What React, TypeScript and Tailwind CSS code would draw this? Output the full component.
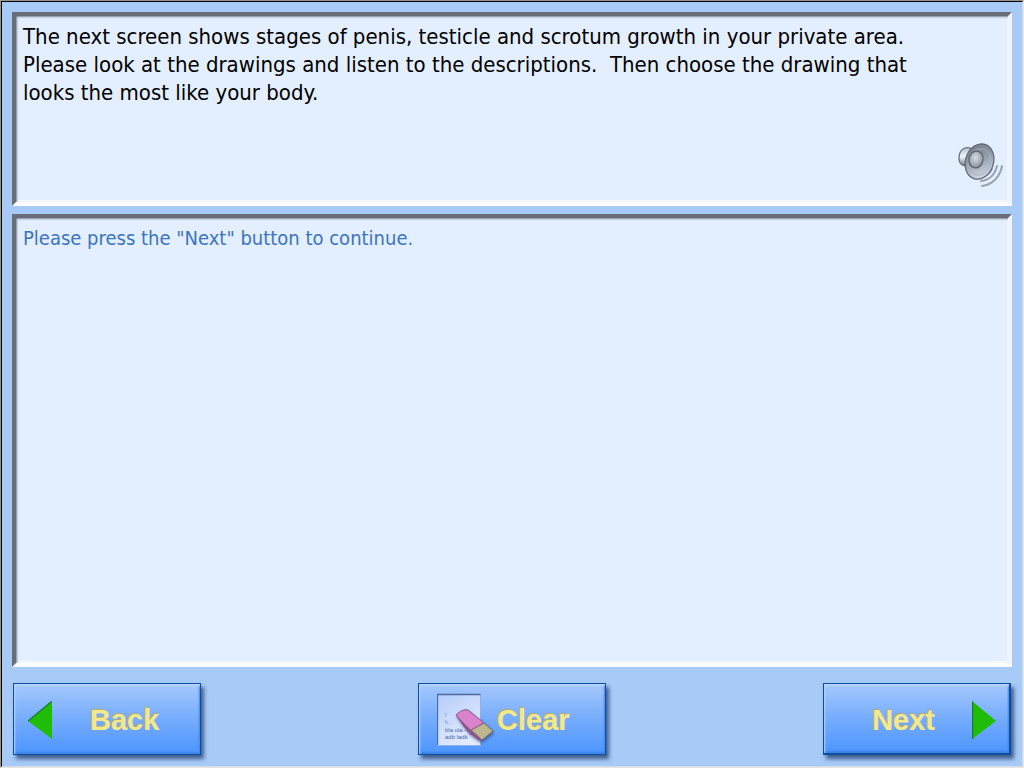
import { useState } from "react"
import type { ReactNode } from "react"

const intro = [
  "The next screen shows stages of penis, testicle and scrotum growth in your private area.",
  "Please look at the drawings and listen to the descriptions.\u00a0 Then choose the drawing that",
  "looks the most like your body.",
].join(" ")

function Panel({ children, className = "" }: { children: ReactNode; className?: string }) {
  return (
    <section
      className={`border-4 border-t-[#696d79] border-r-[#edf5ff] border-b-white border-l-[#696d79] bg-[#e3effe] pt-[7px] pr-0.5 pl-[7px] shadow-[inset_1px_1px_2px_#7d8696,inset_-1px_-2px_1px_#f8fbff] ${className}`}
    >
      {children}
    </section>
  )
}

function SpeakerIcon() {
  return (
    <svg viewBox="0 0 48 48" className="size-12" aria-hidden="true">
      <defs>
        <linearGradient id="cone" x1="0" y1="0" x2="0.6" y2="1">
          <stop offset="0" stopColor="#6f7782" />
          <stop offset="0.45" stopColor="#8c96a3" />
          <stop offset="1" stopColor="#ced8e4" />
        </linearGradient>
        <radialGradient id="dome" cx="0.45" cy="0.4" r="0.6">
          <stop offset="0" stopColor="#d5dde6" />
          <stop offset="1" stopColor="#89939f" />
        </radialGradient>
        <linearGradient id="magnet" x1="0" y1="0" x2="0" y2="1">
          <stop offset="0" stopColor="#b9c3ce" />
          <stop offset="0.5" stopColor="#edf3fa" />
          <stop offset="1" stopColor="#78828e" />
        </linearGradient>
      </defs>
      <g fill="none" stroke="#98a3b1" strokeWidth="2" strokeLinecap="round">
        <path d="M44 24C42 35 34 43 24 44" />
        <path d="M39 24C37 32 32 38 23 39" />
        <path d="M34 27C32 32 28 34 23 35" />
      </g>
      <path d="M14 7C6 3 1 9 1 16c0 6 4 9 9 7z" fill="url(#magnet)" stroke="#69727e" strokeWidth="1.3" />
      <ellipse cx="21.500" cy="19.500" rx="14" ry="18" transform="rotate(18 21.500 19.500)" fill="url(#cone)" stroke="#5c6571" strokeWidth="1.2" />
      <ellipse cx="21.500" cy="20" rx="11" ry="13.500" transform="rotate(18 21.500 20)" fill="none" stroke="#a7b1be" strokeWidth="0.8" />
      <ellipse cx="18" cy="17.500" rx="7" ry="8.500" transform="rotate(10 18 17.500)" fill="url(#dome)" stroke="#59626e" strokeWidth="1.3" />
    </svg>
  )
}

function EraserIcon() {
  return (
    <svg viewBox="0 0 58 54" className="h-[54px] w-[58px] shrink-0 text-shadow-none" aria-hidden="true">
      <defs>
        <linearGradient id="paper" x1="0" y1="0" x2="0.6" y2="1">
          <stop offset="0" stopColor="#b4cdfa" />
          <stop offset="1" stopColor="#e4ebff" />
        </linearGradient>
        <filter id="drop" x="-20%" y="-20%" width="150%" height="150%">
          <feDropShadow dx="1" dy="2" stdDeviation="1.5" floodColor="#253e70" floodOpacity="0.6" />
        </filter>
      </defs>
      <rect x="0.500" y="1.500" width="43" height="51" fill="url(#paper)" stroke="#8fb0e4" />
      <path d="M0.500 52V1.500H43.500" fill="none" stroke="#50689a" strokeWidth="1.3" />
      <g fontFamily="Liberation Sans, sans-serif" fontSize="6" fontWeight="400" fill="#4967a4">
        <text x="8" y="24" opacity="0.5">f</text>
        <text x="8" y="31" opacity="0.6">b..</text>
        <text x="8" y="39">bla  ola -s</text>
        <text x="8" y="46">adb ladk</text>
      </g>
      <g filter="url(#drop)" strokeLinejoin="round">
        <path d="M19 22c4-4 8-6 12-5l16 13-13 12z" fill="#db83ca" stroke="#805a91" />
        <path d="M47 30l9 8-11 9-11-10z" fill="#beb68e" stroke="#716d69" />
        <path d="M19 22l15 15 11 10-2 1c-9-5-17-14-24-26z" fill="#8d558d" />
        <path d="M47 30L34 37" stroke="#8c668f" />
      </g>
    </svg>
  )
}

function Arrow({ direction }: { direction: "left" | "right" }) {
  return (
    <svg viewBox="0 0 24 38" className="h-[38px] w-6 shrink-0" aria-hidden="true">
      <path d={direction === "left" ? "M24 0v38L0 20z" : "M0 0v38l24-18z"} fill="#1fbd05" />
      <path
        d={direction === "left" ? "M0 20L23.500 0.500" : "M0.500 38V0.500"}
        fill="none"
        stroke="#187c25"
        strokeWidth="1.3"
      />
    </svg>
  )
}

function NavButton({ children, onClick, className = "" }: { children: ReactNode; onClick: () => void; className?: string }) {
  return (
    <button
      type="button"
      onClick={onClick}
      className={`flex h-[72px] w-[188px] cursor-pointer items-center border border-[#0b4ea2] bg-linear-to-b from-[#a5c8fd] via-[#75acfd] to-[#4c95ff] font-['Liberation_Sans',Arial,sans-serif] text-[29px] leading-8 font-bold text-[#f2e98c] shadow-[inset_1px_2px_2px_#b8d4ff,inset_-1px_-2px_2px_#3d83e4,3px_4px_4px_#3f5f8d] [text-shadow:-1px_-1px_1px_#b7ab66] ${className}`}
    >
      {children}
    </button>
  )
}

export default function App() {
  const [message, setMessage] = useState('Please press the "Next" button to continue.')

  return (
    <div className="flex min-h-screen flex-col border border-t-[#9a958c] border-r-[#e6e4e0] border-b-[#e6e4e0] border-l-[#9a958c] font-['DejaVu_Sans_Condensed','DejaVu_Sans',sans-serif]">
      <main className="flex flex-1 flex-col gap-2 border border-t-black border-r-[#d3dbe8] border-b-[#d3dbe8] border-l-black bg-[#a8caf7] px-[10px] pt-[10px] pb-[11px]">
        <Panel className="flex min-h-[194px] items-end justify-between">
          <p className="max-w-[920px] self-start text-[22px] leading-7 text-black">{intro}</p>
          <button type="button" aria-label="Play audio" className="mb-3 shrink-0 cursor-pointer">
            <SpeakerIcon />
          </button>
        </Panel>

        <Panel className="flex-1">
          <p className="text-[20px] leading-[26px] text-[#3c74bd]">{message}</p>
        </Panel>

        <nav className="flex justify-between px-px pt-2">
          <NavButton onClick={() => setMessage("")} className="gap-[38px] pt-px pl-[14px]">
            <Arrow direction="left" />
            Back
          </NavButton>
          <NavButton onClick={() => setMessage("")} className="gap-0.5 pt-px pl-[18px]">
            <EraserIcon />
            Clear
          </NavButton>
          <NavButton onClick={() => setMessage("")} className="justify-end gap-[37px] border-r-2 border-b-2 pt-0.5 pr-[13px]">
            Next
            <Arrow direction="right" />
          </NavButton>
        </nav>
      </main>
    </div>
  )
}
